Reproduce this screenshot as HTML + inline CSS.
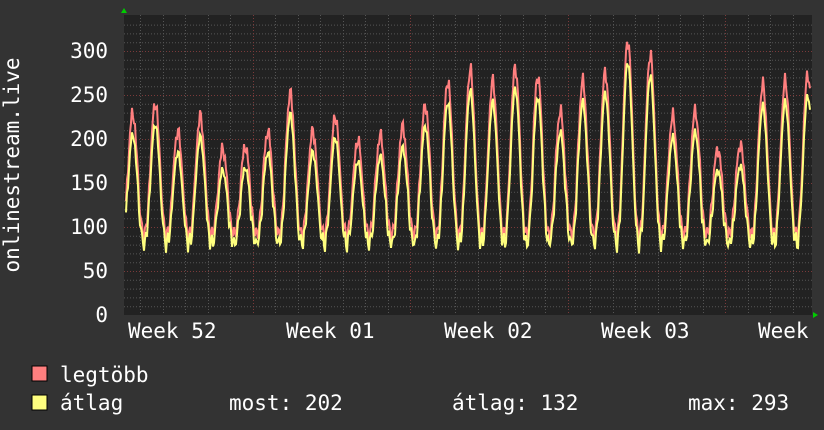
<!DOCTYPE html>
<html><head><meta charset="utf-8"><style>
html,body{margin:0;padding:0;background:#333;width:824px;height:430px;overflow:hidden}
svg text{font-family:"DejaVu Sans Mono","Liberation Mono",monospace;fill:#fff;font-size:21px}
</style></head><body>
<svg id="g" width="824" height="430" xmlns="http://www.w3.org/2000/svg">
<rect width="824" height="430" fill="#333"/>
<rect x="124" y="15" width="688" height="300" fill="#222"/>
<g id="grid"></g>
<g text-anchor="end">
<text x="108" y="58">300</text><text x="108" y="102">250</text><text x="108" y="146">200</text>
<text x="108" y="190">150</text><text x="108" y="234">100</text><text x="108" y="278">50</text><text x="108" y="322">0</text>
</g>
<text transform="translate(19,165) rotate(-90)" text-anchor="middle">onlinestream.live</text>
<text x="128" y="338">Week 52</text><text x="286" y="338">Week 01</text><text x="444" y="338">Week 02</text><text x="601" y="338">Week 03</text><text x="758" y="338">Week</text>
<polyline id="red" fill="none" stroke="#ff7f7f" stroke-width="2" points=""/>
<polyline id="yel" fill="none" stroke="#ffff7f" stroke-width="2" points=""/>
<polygon points="121,13 127,13 124,8" fill="#0c0"/>
<polygon points="813,312 813,318 818,315" fill="#0c0"/>
<rect x="32" y="366" width="15" height="15" fill="#ff7f7f" stroke="#000"/>
<rect x="32" y="395" width="15" height="15" fill="#ffff7f" stroke="#000"/>
<text x="60" y="382">legtöbb</text>
<text x="60" y="410">átlag</text>
<text x="229" y="410">most: 202</text>
<text x="452" y="410">átlag: 132</text>
<text x="688" y="410">max: 293</text>
</svg>
<script>
var ns="http://www.w3.org/2000/svg",g=document.getElementById('grid');
function ln(x1,y1,x2,y2,c){var l=document.createElementNS(ns,'line');l.setAttribute('x1',x1);l.setAttribute('y1',y1);l.setAttribute('x2',x2);l.setAttribute('y2',y2);l.setAttribute('stroke',c);l.setAttribute('stroke-dasharray','1,2');g.appendChild(l);}
for(var v=10;v<=330;v+=10){var y=315-v*0.88;if(y<15)break;ln(124,y+.5,812,y+.5,v%50==0?'#7a3a3a':'#555');}
for(var x=140;x<812;x+=22.5){var xx=Math.round(x)+.5;var maj=[252,410,567,725].some(function(m){return Math.abs(m-x)<3});ln(xx,15,xx,315,maj?'#7a3a3a':'#555');}
var pk=[225,237,205,222,185,188,205,248,205,222,195,200,210,235,262,275,262,278,268,228,262,272,308,292,222,228,185,190,258,262,270];
var r=[],yl=[];
for(var px=0;px<=684;px++){var d=px/22.5+0.2;var i=Math.floor(d),f=d-i;var p=pk[Math.min(i,pk.length-1)];
var s=Math.pow(Math.max(0,Math.sin(Math.PI*f)),2.5);var base=88+8*Math.sin(px*1.7);
var v=base+(p-base)*s;var jit=6*Math.sin(px*2.3)+4*Math.cos(px*5.1);
var vr=v+jit*s+4;var vy=(base-6)+(p-14-base)*s+jit*0.5;
r.push((126+px)+','+(315-vr*0.88).toFixed(1));yl.push((126+px)+','+(315-vy*0.88).toFixed(1));}
document.getElementById('red').setAttribute('points',r.join(' '));
document.getElementById('yel').setAttribute('points',yl.join(' '));
</script>
</body></html>
